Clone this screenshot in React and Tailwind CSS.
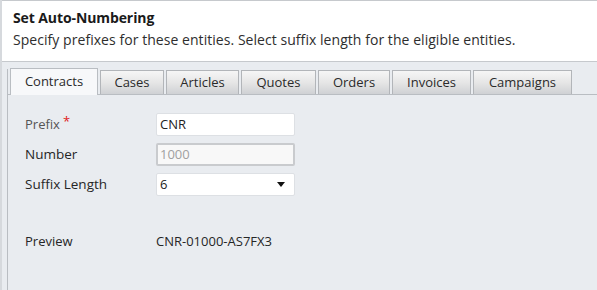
import React from 'react';

const tabs = ['Contracts', 'Cases', 'Articles', 'Quotes', 'Orders', 'Invoices', 'Campaigns'];
const tabWidths = [88, 64, 73, 75, 72, 79, 99];

const font = { fontFamily: '"Open Sans", "Noto Sans", sans-serif' };

const App = () => {
  return (
    <div className="w-[597px] h-[290px] overflow-hidden bg-[#e9ecf0] border-l-[2px] border-[#d6d9dd] flex flex-col" style={font}>
      {/* header */}
      <div className="h-[62px] bg-white border-t border-b border-[#c6c9cd] pl-[11px] pt-[7px] shrink-0">
        <div className="text-[14px] font-bold text-[#1a1a1a] leading-[20px] tracking-[-0.1px]">Set Auto-Numbering</div>
        <div className="text-[14px] text-[#2e2e2e] leading-[20px] mt-[2px] tracking-[0.05px]">
          Specify prefixes for these entities. Select suffix length for the eligible entities.
        </div>
      </div>

      {/* tabs + panel */}
      <div className="flex-1 ml-[5px] mt-[7px] border-l border-[#b9bdc2] flex flex-col">
        <div className="flex items-end pl-[2px] h-[26px] border-b border-[#b9bdc2] gap-[2px]">
          {tabs.map((t, i) =>
            i === 0 ? (
              <div
                key={t}
                className="h-[27px] -mb-px flex items-center justify-center bg-[#f7f8fa] border border-b-0 border-[#b9bdc2] text-[13px] text-[#2a2a2a]"
                style={{ width: tabWidths[i] }}
              >
                {t}
              </div>
            ) : (
              <div
                key={t}
                className="h-[24px] flex items-center justify-center bg-gradient-to-b from-[#f6f6f6] via-[#e6e6e6] to-[#cfd1d4] border border-b-0 border-[#b2b5b9] text-[13px] text-[#2a2a2a]"
                style={{ width: tabWidths[i] }}
              >
                {t}
              </div>
            )
          )}
        </div>

        <div className="pl-[17px] pt-[18px] text-[13.5px]">
          <div className="grid grid-cols-[131px_139px] gap-y-[7px] items-center">
            <div className="text-[#555] text-[13px]">
              Prefix<span className="text-[#e02020] ml-[3px] relative -top-[3px]">*</span>
            </div>
            <div className="h-[23px] bg-white border border-[#dde0e4] rounded-[2px] px-[3px] flex items-center text-[#222] text-[13px]">CNR</div>

            <div className="text-[#262626]">Number</div>
            <div className="h-[23px] bg-[#f8f8f8] border-2 border-[#c9cbce] rounded-[2px] px-[2px] flex items-center text-[#a0a0a0] text-[13px]">1000</div>

            <div className="text-[#262626]">Suffix Length</div>
            <div className="h-[23px] bg-white border border-[#dde0e4] rounded-[2px] px-[3px] flex items-center justify-between text-[#222] text-[13px]">
              <span>6</span>
              <svg width="8" height="5" viewBox="0 0 8 5" className="mr-[6px]">
                <path d="M0 0 H8 L4 5 Z" fill="#111" />
              </svg>
            </div>
          </div>

          <div className="grid grid-cols-[131px_200px] mt-[36px] text-[13px]">
            <div className="text-[#262626]">Preview</div>
            <div className="text-[#262626]">CNR-01000-AS7FX3</div>
          </div>
        </div>
      </div>
    </div>
  );
};

export default App;
